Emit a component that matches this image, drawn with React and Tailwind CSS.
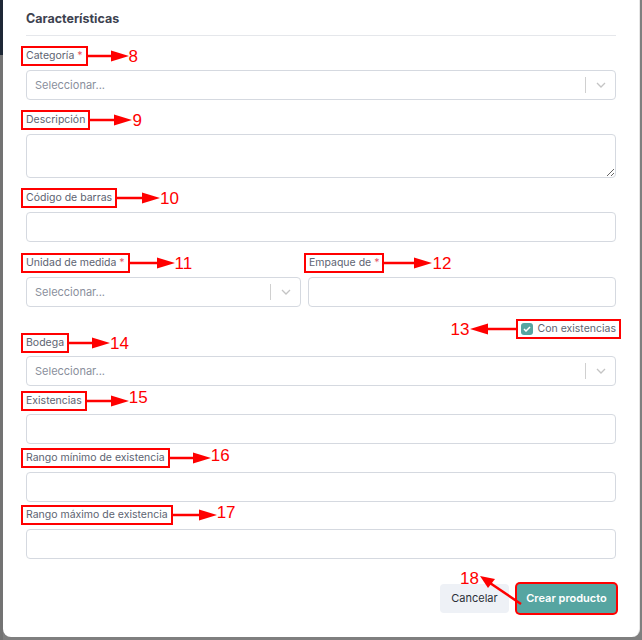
import React from "react";

const FONT = { fontFamily: "Inter, 'Open Sans', sans-serif" };

// red annotation box around a piece of ui
const Tag = ({ children, className = "" }) => (
  <span
    className={`inline-flex items-center border-2 border-[#ff0000] px-[3px] py-px ${className}`}
  >
    {children}
  </span>
);

// horizontal red arrow, pointing right (or left)
const Arrow = ({ len = 42, left = false }) => (
  <svg width={len} height="12" viewBox={`0 0 ${len} 12`} className="shrink-0">
    {left ? (
      <>
        <line x1="14" y1="6" x2={len} y2="6" stroke="#ff0000" strokeWidth="2.5" />
        <polygon points={`0,6 18,0.5 18,11.5`} fill="#ff0000" />
      </>
    ) : (
      <>
        <line x1="0" y1="6" x2={len - 14} y2="6" stroke="#ff0000" strokeWidth="2.5" />
        <polygon points={`${len},6 ${len - 18},0.5 ${len - 18},11.5`} fill="#ff0000" />
      </>
    )}
  </svg>
);

const Num = ({ n, className = "" }) => (
  <span
    className={`text-[17px] leading-none text-[#ff0000] ${className}`}
    style={{ fontFamily: "'Liberation Sans', Arial, sans-serif" }}
  >
    {n}
  </span>
);

const Label = ({ text, req, n, len, numClass = "", className = "" }) => (
  <div className={`flex items-center h-[14px] ${className}`}>
    <Tag className="-ml-[5px]">
      <span className="text-[10.5px] leading-[14px] text-[#5d6371]">
        {text}
        {req && <span className="text-[#e5566a]"> *</span>}
      </span>
    </Tag>
    <Arrow len={len} />
    <Num n={n} className={numClass} />
  </div>
);

const Select = () => (
  <div className="h-[30px] border border-[#d5d9e0] rounded-[4px] flex items-center bg-white">
    <span className="flex-1 pl-[8px] text-[11px] text-[#8a8f9c]">Seleccionar...</span>
    <span className="w-px h-[16px] bg-[#d0d0d0]" />
    <span className="w-[29px] flex items-center justify-center">
      <svg width="10" height="6" viewBox="0 0 10 6">
        <path d="M1 1 L5 5 L9 1" fill="none" stroke="#c4c4c4" strokeWidth="1.3" />
      </svg>
    </span>
  </div>
);

const Input = () => (
  <div className="h-[30px] border border-[#d5d9e0] rounded-[4px] bg-white" />
);

export default function App() {
  return (
    <div className="relative flex w-full h-[640px] bg-[#7f7f7f] overflow-hidden" style={FONT}>
      {/* backdrop strip */}
      <div className="w-[3px] flex flex-col shrink-0">
        <div className="h-[55px] bg-[#1e2836]" />
        <div className="flex-1 bg-[#737373]" />
      </div>

      {/* modal */}
      <div className="relative w-[637px] h-[637px] bg-white rounded-b-[8px] border-r border-[#e6e6e6] pl-[23px] pr-[23px] pt-[9px]">
        <h3 className="text-[12.5px] leading-[20px] font-bold text-[#3d424f] pb-[6px] border-b border-[#e5e7eb]">
          Características
        </h3>

        <Label text="Categoría" req n="8" len={41} className="mt-[13px] mb-[7px]" />
        <Select />

        <Label text="Descripción" n="9" len={42} className="mt-[13px] mb-[7px]" />
        <textarea className="block w-full h-[44px] border border-[#d5d9e0] rounded-[4px] outline-none" />

        <Label text="Código de barras" n="10" len={43} className="mt-[13px] mb-[7px]" />
        <Input />

        <div className="grid grid-cols-[275px_1fr] gap-x-[7px] mt-[14px]">
          <Label text="Unidad de medida" req n="11" len={45} className="mb-[7px]" />
          <Label text="Empaque de" req n="12" len={48} className="mb-[7px] ml-[1px]" />
          <Select />
          <Input />
        </div>

        <div className="flex items-center justify-end h-[14px] mt-[15px]">
          <Num n="13" />
          <Arrow len={46} left />
          <Tag className="-mr-[5px] gap-[5px] py-[3px]">
            <span className="w-[12px] h-[12px] rounded-[3px] bg-[#56a5a1] flex items-center justify-center">
              <svg width="8" height="6" viewBox="0 0 8 6">
                <path d="M1 3 L3 5 L7 1" fill="none" stroke="#fff" strokeWidth="1.5" />
              </svg>
            </span>
            <span className="text-[10.5px] leading-[14px] text-[#5d6371]">Con existencias</span>
          </Tag>
        </div>

        <Label text="Bodega" n="14" len={41} className="mb-[6px]" />
        <Select />

        <Label text="Existencias" n="15" len={42} numClass="-mt-[7px]" className="mt-[8px] mb-[6px]" />
        <Input />

        <Label text="Rango mínimo de existencia" n="16" len={41} numClass="-mt-[5px]" className="mt-[7px] mb-[7px]" />
        <Input />

        <Label text="Rango máximo de existencia" n="17" len={44} numClass="-mt-[5px]" className="mt-[6px] mb-[7px]" />
        <Input />

        <div className="flex justify-end gap-[8px] mt-[25px]">
          <button className="h-[29px] w-[69px] rounded-[4px] bg-[#eef1f6] text-[11px] text-[#2b2f38]">
            Cancelar
          </button>
          <button className="h-[29px] w-[99px] rounded-[3px] bg-[#56a5a1] text-[11px] font-semibold text-white ring-2 ring-[#ff0000]">
            Crear producto
          </button>
        </div>

        {/* annotation 18 */}
        <div className="absolute left-[457px] top-[566px]">
          <Num n="18" />
        </div>
        <svg className="absolute left-[474px] top-[574px]" width="46" height="32" viewBox="0 0 46 32">
          <line x1="44" y1="30" x2="10" y2="7" stroke="#ff0000" strokeWidth="2.5" />
          <polygon points="3,2 18,5 11,14" fill="#ff0000" />
        </svg>
      </div>
    </div>
  );
}
